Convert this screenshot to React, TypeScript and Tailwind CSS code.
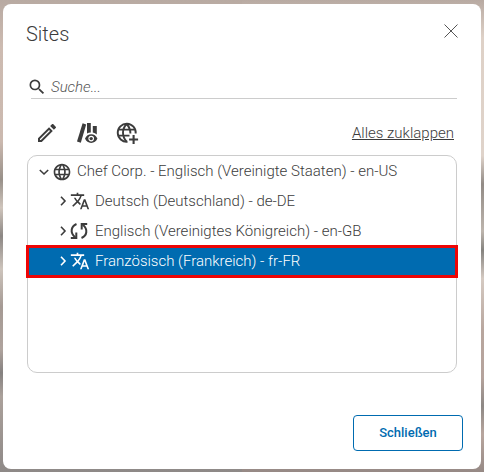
import { MdLanguage, MdOutlineEdit, MdSearch, MdTranslate } from 'react-icons/md';

const BooksEye = () => (
  <svg viewBox="0 0 24 24" className="h-6 w-6" fill="currentColor">
    <path d="M7.600 2.300l3.600 1.300-5.400 18.200-3.800-1.200Z" />
    <path d="M12 2h3.800v9.500c-1.500 0-2.700.3-3.800.9ZM17.800 5h4v8.500c-1.200-1-2.500-1.600-4-1.900Z" />
    <path
      fillRule="evenodd"
      d="M10 17.600c1.200-2.900 3.400-4.400 6.200-4.400s5 1.500 6.200 4.400c-1.200 2.900-3.400 4.400-6.200 4.400s-5-1.500-6.200-4.400Zm6.200-2.800a2.800 2.800 0 1 0 0 5.600a2.800 2.800 0 1 0 0-5.600Z"
    />
    <circle cx="16.200" cy="17.600" r="1.700" />
  </svg>
);

const GlobePlus = () => (
  <svg viewBox="0 0 24 24" className="h-6 w-6" fill="none" stroke="currentColor" strokeWidth="1.900">
    <path d="M12.500 20.700A9 9 0 1 1 20.700 12.500" />
    <path d="M3 8.600h17.500M3 14.600h11.500M11.600 3c-4.800 5-4.800 12.500 0 17.700M11.600 3c2.600 2.800 3.800 5.900 3.800 9.500" />
    <path d="M18.600 14v9M14.100 18.500h9" strokeWidth="2.100" />
  </svg>
);

const Sync = () => (
  <svg viewBox="0 0 20 20" className="h-5 w-5" fill="none" stroke="currentColor" strokeWidth="2">
    <path d="M7.500 3C1.800 5.500 1 11.500 5.800 16M1.800 17h5.500v-5.500M12.500 17C18.200 14.500 19 8.500 14.200 4M18.200 3h-5.500v5.500" />
  </svg>
);

const Chevron = ({ open = false }: { open?: boolean }) => (
  <svg viewBox="0 0 12 12" className="h-3 w-3" fill="none" stroke="currentColor" strokeWidth="1.600">
    <path d={open ? 'M1.800 4l4.200 4 4.200-4' : 'M4 1.800l4 4.200-4 4.200'} />
  </svg>
);

const children = [
  { label: 'Deutsch (Deutschland) - de-DE', icon: MdTranslate, gap: 'ml-[5px]' },
  { label: 'Englisch (Vereinigtes Königreich) - en-GB', icon: Sync, gap: 'ml-1.5' },
  { label: 'Französisch (Frankreich) - fr-FR', icon: MdTranslate, gap: 'ml-[5px]', selected: true },
];

export default function App() {
  return (
    <div className="h-[472px] w-[484px] bg-[linear-gradient(180deg,#b8aaa2_0%,#cdbbb1_10%,#cbb9af_30%,#989089_38%,#cfc5bc_44%,#8c8784_50%,#cdc4bc_57%,#a59a94_65%,#afa39d_74%,#858180_79%,#aba19b_84%,#8e8987_100%)] font-['Roboto',sans-serif] text-[#3c3c3c]">
      <div className="h-full bg-[linear-gradient(180deg,#b8aaa2_0%,#ded1c7_8%,#dfd3ca_33%,#928b86_39%,#bdb5ad_49%,#85837f_53%,#d5cac2_59%,#b8a69e_70%,#b5a39c_80%,#8d8885_86%,#b8a69e_92%,#968985_100%)] bg-[length:242px_100%] bg-right bg-no-repeat px-[3px] pt-1 pb-[3px]">
        <div className="flex h-full flex-col rounded-lg bg-white pr-[18px] pl-6">
          <header className="flex h-[60px] items-center justify-between pr-[5px]">
            <h1 className="-ml-px text-xl font-light">Sites</h1>
            <svg viewBox="0 0 14 14" className="mb-[7px] h-3.5 w-3.5" stroke="#555" strokeWidth="1">
              <path d="M0.500 0.500l13 13M13.500 0.500l-13 13" />
            </svg>
          </header>
          <div className="ml-1 flex h-[35px] w-[426px] items-center gap-1 border-b border-[#ccc] pt-3">
            <MdSearch className="-ml-1 h-5 w-5" />
            <span className="text-[15px] font-light text-[#555] italic">Suche...</span>
          </div>
          <div className="flex h-14 items-center pt-3 pl-2">
            <div className="flex items-center gap-4">
              <MdOutlineEdit className="h-6 w-6" />
              <BooksEye />
              <GlobePlus />
            </div>
            <a className="mr-[9px] ml-auto text-[15px] font-light underline">Alles zuklappen</a>
          </div>
          <div className="h-[218px] w-[430px] rounded-[10px] border border-[#ccc] pt-px text-[15px] font-light">
            <div className="flex h-[29px] items-center pl-2.5">
              <Chevron open />
              <MdLanguage className="ml-[2px] h-5 w-5" />
              <span className="ml-[5px] whitespace-nowrap">Chef Corp. - Englisch (Vereinigte Staaten) - en-US</span>
            </div>
            {children.map(({ label, icon: Icon, gap, selected }) => (
              <div
                key={label}
                className={
                  selected
                    ? '-mx-[2px] -mt-px flex h-[33px] items-center border-[3px] border-[#ee0505] bg-[#006bb0] pb-px pl-[28px] text-white'
                    : 'flex h-[30px] items-center pl-[29px]'
                }
              >
                <Chevron />
                <Icon className="ml-px h-5 w-5 shrink-0" />
                <span className={`${gap} whitespace-nowrap`}>{label}</span>
              </div>
            ))}
          </div>
          <button className="mt-[42px] h-9 w-[110px] self-end rounded border border-[#006bb0] text-[13px] font-medium text-[#006bb0]">
            Schließen
          </button>
        </div>
      </div>
    </div>
  );
}
